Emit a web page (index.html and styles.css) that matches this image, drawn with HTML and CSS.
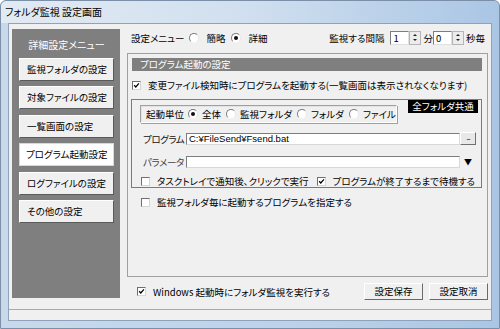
FILE: index.html
```html
<!DOCTYPE html>
<html lang="ja">
<head>
  <meta charset="UTF-8">
  <title>フォルダ監視 設定画面</title>
  <link rel="stylesheet" href="styles.css">
</head>
<body>
<div class="window">
  <div class="titlebar">フォルダ監視 設定画面</div>
  <div class="client">
    <div class="main">

      <div class="side-menu">
        <div class="side-title">詳細設定メニュー</div>
        <div class="menu-btn">監視フォルダの設定</div>
        <div class="menu-btn">対象ファイルの設定</div>
        <div class="menu-btn">一覧画面の設定</div>
        <div class="menu-btn active">プログラム起動設定</div>
        <div class="menu-btn">ログファイルの設定</div>
        <div class="menu-btn">その他の設定</div>
      </div>

      <div class="content">
        <div class="top-row">
          <span class="lbl">設定メニュー</span>
          <span class="radio"></span><span class="opt">簡略</span>
          <span class="radio checked"></span><span class="opt">詳細</span>
          <div class="interval">
            <span class="lbl">監視する間隔</span>
            <span class="spin"><span class="spin-input">1</span><span class="spin-btn"><i class="up"></i><i class="down"></i></span></span>
            <span>分</span>
            <span class="spin"><span class="spin-input">0</span><span class="spin-btn"><i class="up"></i><i class="down"></i></span></span>
            <span>秒毎</span>
          </div>
        </div>

        <div class="panel">
          <div class="panel-head">プログラム起動の設定</div>
          <div class="check-row first">
            <span class="checkbox"><svg viewBox="0 0 9 9"><path d="M1.5 4.2 L3.6 6.4 L7.6 1.8" /></svg></span>
            <span>変更ファイル検知時にプログラムを起動する(一覧画面は表示されなくなります)</span>
          </div>

          <div class="group">
            <div class="badge">全フォルダ共通</div>
            <div class="unit-box">
              <span class="lbl">起動単位</span>
              <span class="radio checked"></span><span class="opt">全体</span>
              <span class="radio"></span><span class="opt">監視フォルダ</span>
              <span class="radio"></span><span class="opt">フォルダ</span>
              <span class="radio"></span><span class="opt">ファイル</span>
            </div>
            <div class="field-row prog">
              <span class="field-label">プログラム</span>
              <span class="textbox">C:¥FileSend¥Fsend.bat</span>
              <span class="browse">...</span>
            </div>
            <div class="field-row param">
              <span class="field-label">パラメータ</span>
              <span class="textbox"></span>
              <span class="drop">▼</span>
            </div>
            <div class="check-row inner">
              <span class="checkbox empty"></span>
              <span class="tray">タスクトレイで通知後、クリックで実行</span>
              <span class="checkbox"><svg viewBox="0 0 9 9"><path d="M1.5 4.2 L3.6 6.4 L7.6 1.8" /></svg></span>
              <span>プログラムが終了するまで待機する</span>
            </div>
          </div>

          <div class="check-row per-folder">
            <span class="checkbox empty"></span>
            <span>監視フォルダ毎に起動するプログラムを指定する</span>
          </div>
        </div>

        <div class="bottom-row">
          <span class="checkbox"><svg viewBox="0 0 9 9"><path d="M1.5 4.2 L3.6 6.4 L7.6 1.8" /></svg></span>
          <span class="startup">Windows 起動時にフォルダ監視を実行する</span>
          <span class="btn">設定保存</span>
          <span class="btn">設定取消</span>
        </div>
      </div>

    </div>
    <div class="statusbar"></div>
  </div>
</div>
</body>
</html>
```

FILE: styles.css
```css
html, body {
  margin: 0;
  padding: 0;
  width: 500px;
  height: 329px;
  overflow: hidden;
  font-family: "Noto Sans CJK JP", "Noto Sans", sans-serif;
  font-size: 9.5px;
  line-height: 12px;
  font-feature-settings: "palt";
  color: #000;
}

.window {
  box-sizing: border-box;
  width: 500px;
  height: 329px;
  padding: 0 7px 8px 7px;
  background: linear-gradient(to right, #c9d9ea, #bcd2ea 60%, #aac6e4);
  border: 1px solid #7b8fa8;
  border-radius: 6px 6px 0 0;
}

.titlebar {
  height: 22px;
  line-height: 22px;
  margin: 0 -7px;
  padding-left: 4px;
  font-size: 10px;
  border-radius: 6px 6px 0 0;
  background: linear-gradient(to right, #e2eaf3, #d0dfef 50%, #aac6e5);
}

.client {
  border: 1px solid #8ea3bb;
  background: #f0f0f0;
  height: 296px;
}

.main {
  display: flex;
  height: 285px;
  box-sizing: border-box;
  padding: 5px 0 0 3px;
  gap: 7px;
}

/* left menu */
.side-menu {
  box-sizing: border-box;
  width: 108px;
  height: 269px;
  background: #7f7f7f;
  padding: 9px 6px 0 7px;
  display: flex;
  flex-direction: column;
  gap: 5.5px;
}

.side-title {
  color: #fff;
  text-align: center;
  line-height: 14px;
  font-size: 10px;
}

.menu-btn {
  box-sizing: border-box;
  height: 23px;
  line-height: 21px;
  padding-left: 7px;
  background: #f0f0f0;
  border: 1px solid;
  border-color: #ffffff #5a5a5a #5a5a5a #ffffff;
  white-space: nowrap;
}

.menu-btn.active {
  background: #ffffff;
  border-color: #d8d8d8;
  padding-left: 6px;
}

/* right side */
.content {
  width: 361px;
  display: flex;
  flex-direction: column;
}

.top-row {
  display: flex;
  align-items: center;
  height: 17px;
  padding-left: 4px;
  white-space: nowrap;
}

.top-row .lbl {
  margin-right: 5px;
}

.top-row .radio {
  margin-right: 7px;
}

.opt {
  margin-right: 6px;
}

.radio {
  box-sizing: border-box;
  display: inline-block;
  width: 10px;
  height: 10px;
  border-radius: 50%;
  border: 1px solid;
  border-color: #7d7d7d #e6e6e6 #f4f4f4 #7d7d7d;
  background: #fff;
  margin-right: 6px;
  position: relative;
  flex: none;
}

.radio.checked::after {
  content: "";
  position: absolute;
  left: 2px;
  top: 2px;
  width: 4px;
  height: 4px;
  border-radius: 50%;
  background: #111;
}

.interval {
  margin-left: auto;
  margin-right: 3px;
  display: flex;
  align-items: center;
}

.interval .lbl {
  margin-right: 6px;
}

.spin {
  display: inline-flex;
  height: 14px;
  margin-right: 2px;
}

.spin-input {
  box-sizing: border-box;
  width: 19px;
  height: 14px;
  line-height: 12px;
  background: #fff;
  border: 1px solid;
  border-color: #7d7d7d #e0e0e0 #e0e0e0 #7d7d7d;
  padding-left: 2px;
}

.spin-btn {
  box-sizing: border-box;
  width: 12px;
  height: 14px;
  background: #ececec;
  border: 1px solid #b5b5b5;
  display: flex;
  flex-direction: column;
  align-items: center;
  justify-content: space-evenly;
}

.spin-btn i {
  display: block;
  width: 0;
  height: 0;
  border-left: 2px solid transparent;
  border-right: 2px solid transparent;
}

.spin-btn .up { border-bottom: 2px solid #222; }
.spin-btn .down { border-top: 2px solid #222; }

.panel {
  box-sizing: border-box;
  margin-top: 7px;
  height: 224px;
  border: 1px solid #a0a0a0;
  padding: 4px 5px 0 4px;
}

.panel-head {
  height: 13px;
  line-height: 13px;
  background: #7f7f7f;
  color: #fff;
  padding-left: 8px;
}

.check-row {
  display: flex;
  align-items: center;
  height: 12px;
  white-space: nowrap;
}

.check-row.first {
  margin-top: 8px;
}

.checkbox {
  box-sizing: border-box;
  display: inline-block;
  width: 9px;
  height: 9px;
  background: #fff;
  border: 1px solid;
  border-color: #6f6f6f #d6d6d6 #d6d6d6 #6f6f6f;
  margin-right: 7px;
  flex: none;
}

.checkbox svg {
  display: block;
  width: 7px;
  height: 7px;
}

.checkbox path {
  fill: none;
  stroke: #000;
  stroke-width: 1.6;
}

.group {
  position: relative;
  box-sizing: border-box;
  margin: 8px 0 0 -1px;
  height: 89px;
  border: 1px solid #7a7a7a;
  padding: 5px 5px 0 8px;
}

.badge {
  position: absolute;
  top: 0;
  right: 3px;
  width: 70px;
  height: 13px;
  line-height: 13px;
  background: #000;
  color: #fff;
  text-align: center;
}

.unit-box {
  box-sizing: border-box;
  width: 257px;
  height: 18px;
  border: 1px solid;
  border-color: #a0a0a0 #ffffff #ffffff #a0a0a0;
  box-shadow: inset 1px 1px 0 #e3e3e3, 1px 1px 0 #a0a0a0;
  display: flex;
  align-items: center;
  padding-left: 5px;
  white-space: nowrap;
}

.unit-box .lbl {
  margin-right: 4px;
}

.unit-box .opt {
  margin-right: 5px;
}

.unit-box .radio {
  margin-right: 4px;
}

.field-row {
  display: flex;
  align-items: center;
  height: 13px;
  padding-left: 3px;
}

.field-row.prog {
  margin-top: 9px;
}

.field-row.param {
  margin-top: 10px;
}

.field-label {
  width: 43px;
  flex: none;
  white-space: nowrap;
  letter-spacing: -0.4px;
  color: #111;
}

.field-row.param .field-label {
  color: #444;
}

.textbox {
  box-sizing: border-box;
  flex: 1;
  height: 12px;
  line-height: 10px;
  background: #fff;
  border: 1px solid;
  border-color: #7d7d7d #d8d8d8 #d8d8d8 #7d7d7d;
  padding-left: 2px;
  font-family: "Liberation Sans", sans-serif;
  font-size: 9.5px;
}

.browse {
  box-sizing: border-box;
  width: 16px;
  height: 13px;
  line-height: 7px;
  text-align: center;
  background: #e8e8e8;
  border: 1px solid;
  border-color: #ffffff #707070 #707070 #ffffff;
  font-size: 8px;
  letter-spacing: -1px;
  color: #333;
}

.drop {
  width: 16px;
  text-align: center;
  font-size: 8px;
  line-height: 12px;
}

.check-row.inner {
  margin-top: 7px;
  padding-left: 1px;
}

.tray {
  margin-right: 8px;
}

.check-row.per-folder {
  margin-top: 8px;
  padding-left: 9px;
}

.bottom-row {
  display: flex;
  align-items: center;
  margin-top: 6px;
  height: 17px;
  padding-left: 10px;
  white-space: nowrap;
}

.startup {
  margin-right: auto;
}

.btn {
  box-sizing: border-box;
  width: 59px;
  height: 17px;
  line-height: 15px;
  text-align: center;
  background: #f0f0f0;
  border: 1px solid;
  border-color: #ffffff #6a6a6a #6a6a6a #ffffff;
  margin-left: 6px;
}

.statusbar {
  border-top: 1px solid #a9a9a9;
  height: 10px;
}
```
